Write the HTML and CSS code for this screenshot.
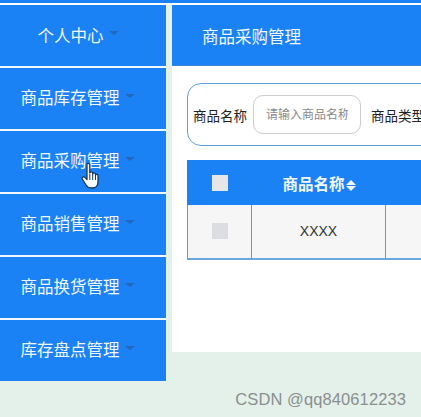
FILE: index.html
```html
<!DOCTYPE html>
<html>
<head>
	<title>商品采购管理</title>
	<link rel="stylesheet" href="styles.css">
</head>
<body>
	<div class="topline"></div>
	<div class="layout">
		<ul class="menu">
			<li class="menu-item first"><span>个人中心</span><i class="caret"></i></li>
			<li class="menu-item"><span>商品库存管理</span><i class="caret"></i></li>
			<li class="menu-item"><span>商品采购管理</span><i class="caret"></i>
				<svg class="cursor" width="22" height="28" viewBox="0 0 22 28">
					<path d="M7 2.500c0-1.600 2.800-1.600 2.800 0V11c.2-1.600 2.800-1.600 2.900 0v1c.2-1.500 2.700-1.500 2.800 0v1.200c.3-1.300 2.500-1.100 2.500.4V20c0 3.500-2.200 6-5.500 6H11c-2.500 0-3.800-1-5-3l-3.700-6c-1-1.700 1.200-3.100 2.500-1.600L7 17.500z" fill="#fff" stroke="#16375f" stroke-width="1.300" stroke-linejoin="round"/>
					<path d="M9.800 12v6M12.700 12v6M15.500 13v5" fill="none" stroke="#16375f" stroke-width="1"/>
				</svg>
			</li>
			<li class="menu-item"><span>商品销售管理</span><i class="caret"></i></li>
			<li class="menu-item"><span>商品换货管理</span><i class="caret"></i></li>
			<li class="menu-item"><span>库存盘点管理</span><i class="caret"></i></li>
		</ul>
		<div class="main">
			<div class="main-title">商品采购管理</div>
			<div class="main-body">
				<form class="search">
					<label>商品名称</label>
					<input type="text" placeholder="请输入商品名称">
					<label>商品类型</label>
				</form>
				<table class="goods">
					<tr class="head">
						<th class="col-check"><i class="check"></i></th>
						<th class="col-name">商品名称<span class="sort"><i></i><i></i></span></th>
						<th class="col-rest">商品类型</th>
					</tr>
					<tr>
						<td><i class="check grey"></i></td>
						<td>XXXX</td>
						<td></td>
					</tr>
				</table>
			</div>
		</div>
	</div>
	<div class="watermark">CSDN @qq840612233</div>
</body>
</html>
```

FILE: styles.css
```css
* {
	box-sizing: border-box;
}
html, body {
	margin: 0;
	height: 417px;
	overflow: hidden;
}
body {
	position: relative;
	background-color: #e4f0ea;
	font-family: "Liberation Sans", "Noto Sans CJK SC", sans-serif;
}
.topline {
	height: 5px;
	background-color: #fff;
	border-top: 3px solid #1a82f5;
}
.layout {
	display: flex;
	align-items: flex-start;
	gap: 6px;
}
.menu {
	width: 166px;
	flex: none;
	margin: 0;
	padding: 0;
	list-style: none;
	background-color: #f2f8fb;
}
.menu-item {
	position: relative;
	display: flex;
	align-items: center;
	justify-content: center;
	height: 61px;
	margin-bottom: 2px;
	padding-bottom: 3px;
	padding-right: 11px;
	background-color: #1a82f5;
	color: #f2f7fc;
	font-size: 16.500px;
}
.menu-item:last-child {
	margin-bottom: 0;
}
.menu-item.first {
	padding-bottom: 2px;
	padding-right: 10px;
}
.caret {
	width: 0;
	height: 0;
	margin-left: 5px;
	margin-top: -3px;
	border-left: 5px solid transparent;
	border-right: 5px solid transparent;
	border-top: 4px solid #2467b8;
}
.cursor {
	position: absolute;
	left: 80px;
	top: 31px;
}
.main {
	flex: 1;
	min-width: 0;
	height: 347px;
	background-color: #fff;
}
.main-title {
	height: 61px;
	padding: 22px 0 0 30px;
	background-color: #1a82f5;
	color: #f2f7fc;
	font-size: 16.500px;
	line-height: 21px;
	border-bottom: 1px solid #3d85d0;
}
.main-body {
	padding: 17px 0 0 15px;
	width: 700px;
}
.search {
	display: flex;
	align-items: center;
	height: 63px;
	padding-left: 5px;
	border: 1px solid #5da1dc;
	border-radius: 14px;
	color: #222;
	font-size: 13.500px;
}
.search input {
	width: 108px;
	height: 39px;
	margin: 0 10px 0 6px;
	padding: 0 12px;
	border: 1px solid #ccc;
	border-radius: 10px;
	font-family: inherit;
	font-size: 12px;
	outline: none;
}
.search input::placeholder {
	color: #8a8a8a;
}
.goods {
	width: 700px;
	margin-top: 14px;
	border-collapse: separate;
	border-spacing: 0;
	table-layout: fixed;
	font-size: 14px;
}
.goods th {
	height: 45px;
	padding: 0;
	background-color: #1a82f5;
	color: #f2f7fc;
	font-size: 15.500px;
}
.goods td {
	height: 55px;
	padding: 0 0 2px;
	background-color: #f6f6f6;
	color: #333;
	text-align: center;
	border-right: 1px solid #5a9bd8;
	border-bottom: 2px solid #6ba8e0;
}
.goods td:first-child {
	border-left: 1px solid #5a9bd8;
}
.col-check {
	width: 65px;
}
.col-name {
	width: 134px;
}
.check {
	display: block;
	width: 16px;
	height: 16px;
	margin: 0 auto;
	background-color: #e6e6e8;
}
.check.grey {
	background-color: #dcdde0;
}
.sort {
	display: inline-block;
	margin-left: 1px;
	vertical-align: -1px;
}
.sort i {
	display: block;
	width: 0;
	height: 0;
	border-left: 5px solid transparent;
	border-right: 5px solid transparent;
	border-bottom: 5px solid #f2f7fc;
}
.sort i + i {
	margin-top: 1px;
	border-bottom: none;
	border-top: 5px solid #f2f7fc;
}
.watermark {
	position: absolute;
	right: 15px;
	bottom: 8px;
	color: #8b8f8e;
	font-size: 16.500px;
	letter-spacing: 0.100px;
}
```
